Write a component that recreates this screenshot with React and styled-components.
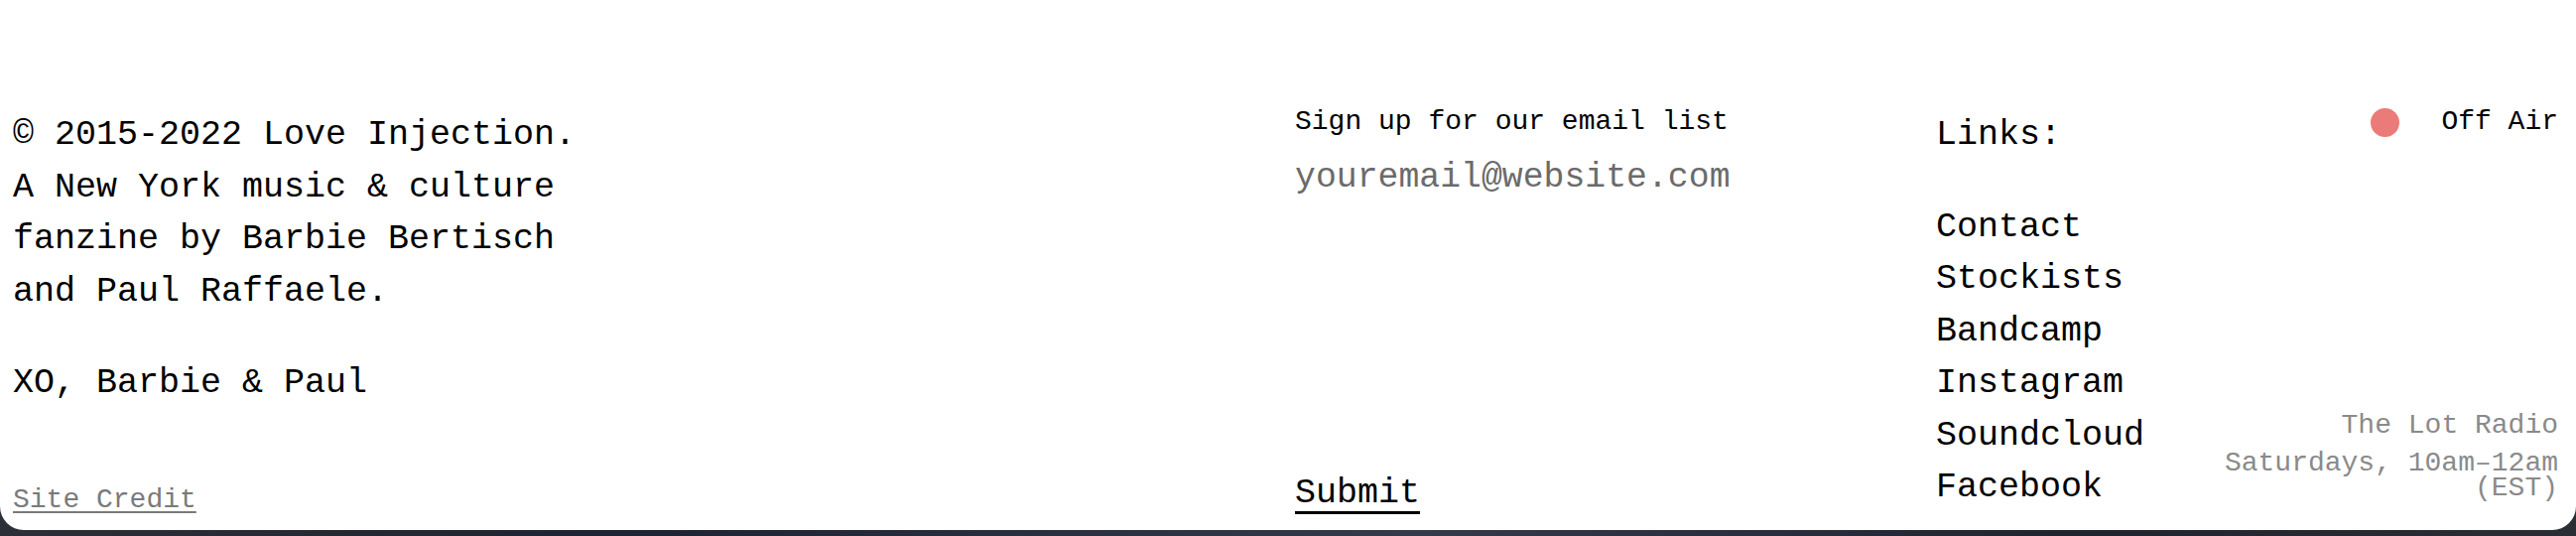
import React from 'react'
import styled, { createGlobalStyle } from 'styled-components'

const GlobalStyle = createGlobalStyle`
  html, body {
    margin: 0;
    padding: 0;
  }
  body {
    background: linear-gradient(90deg, #2b2f37 0%, #1c2331 25%, #333a48 55%, #1e2430 80%, #2a2d33 100%);
    font-family: "Liberation Mono", "DejaVu Sans Mono", monospace;
    color: #000;
  }
`

const Footer = styled.footer`
  box-sizing: border-box;
  height: 534px;
  background: #fff;
  border-radius: 0 0 24px 24px;
  padding: 100px 18px 18px 13px;
  display: grid;
  grid-template-columns: 1292px 646px 1fr;
`

const About = styled.div`
  display: flex;
  flex-direction: column;
`

const Para = styled.p`
  margin: ${p => (p.$first ? '10px' : '40px')} 0 0;
  max-width: 600px;
  font-size: 35px;
  line-height: 52.5px;
`

const Credit = styled.a`
  margin-top: auto;
  align-self: flex-start;
  font-size: 28px;
  line-height: 28px;
  color: #7a7a7a;
  text-decoration: underline;
  text-decoration-thickness: 2px;
  text-underline-offset: 4px;
`

const Signup = styled.form`
  display: flex;
  flex-direction: column;
`

const Label = styled.label`
  margin-top: 9px;
  font-size: 28px;
  line-height: 28px;
`

const EmailInput = styled.input`
  margin-top: 19px;
  width: 600px;
  height: 44px;
  padding: 0;
  border: 0;
  outline: none;
  background: transparent;
  font-family: "Liberation Mono", "DejaVu Sans Mono", monospace;
  font-size: 34.8px;
  color: #000;

  &::placeholder {
    color: #6b6b6b;
    opacity: 1;
  }
`

const SubmitButton = styled.button`
  margin-top: auto;
  align-self: flex-start;
  padding: 0;
  border: 0;
  border-bottom: 3px solid #000;
  background: none;
  font-family: "Liberation Mono", "DejaVu Sans Mono", monospace;
  font-size: 35px;
  line-height: 35px;
  color: #000;
  cursor: pointer;
`

const Side = styled.div`
  display: flex;
  justify-content: space-between;
`

const Links = styled.nav`
  font-size: 35px;
  line-height: 52.5px;
`

const LinksTitle = styled.div`
  margin-top: 10px;
`

const LinkList = styled.ul`
  list-style: none;
  margin: 40px 0 0;
  padding: 0;

  a {
    color: #000;
    text-decoration: none;
  }
`

const Status = styled.div`
  display: flex;
  flex-direction: column;
  justify-content: space-between;
  align-items: flex-end;
`

const AirState = styled.div`
  display: flex;
  align-items: center;
  gap: 42px;
  margin-top: 8px;
  font-size: 28px;
  line-height: 30px;
`

const Dot = styled.span`
  width: 29px;
  height: 29px;
  border-radius: 50%;
  background: ${p => (p.$live ? '#3fcf6c' : '#eb7b78')};
`

const Radio = styled.div`
  max-width: 350px;
  margin-bottom: 14px;
  text-align: right;
  color: #8a8a8a;
  font-size: 28px;
  line-height: 25px;

  p {
    margin: 0;
  }
  p + p {
    margin-top: 13px;
  }
`

const links = ['Contact', 'Stockists', 'Bandcamp', 'Instagram', 'Soundcloud', 'Facebook']

export default function App() {
  return (
    <>
      <GlobalStyle />
      <Footer>
        <About>
          <Para $first>
            © 2015-2022 Love Injection.
            <br />
            A New York music &amp; culture fanzine by Barbie Bertisch and Paul Raffaele.
          </Para>
          <Para>XO, Barbie &amp; Paul</Para>
          <Credit href="#">Site Credit</Credit>
        </About>

        <Signup onSubmit={e => e.preventDefault()}>
          <Label htmlFor="email">Sign up for our email list</Label>
          <EmailInput id="email" type="email" placeholder="youremail@website.com" />
          <SubmitButton type="submit">Submit</SubmitButton>
        </Signup>

        <Side>
          <Links>
            <LinksTitle>Links:</LinksTitle>
            <LinkList>
              {links.map(l => (
                <li key={l}>
                  <a href="#">{l}</a>
                </li>
              ))}
            </LinkList>
          </Links>
          <Status>
            <AirState>
              <Dot />
              <span>Off Air</span>
            </AirState>
            <Radio>
              <p>The Lot Radio</p>
              <p>Saturdays, 10am–12am (EST)</p>
            </Radio>
          </Status>
        </Side>
      </Footer>
    </>
  )
}
